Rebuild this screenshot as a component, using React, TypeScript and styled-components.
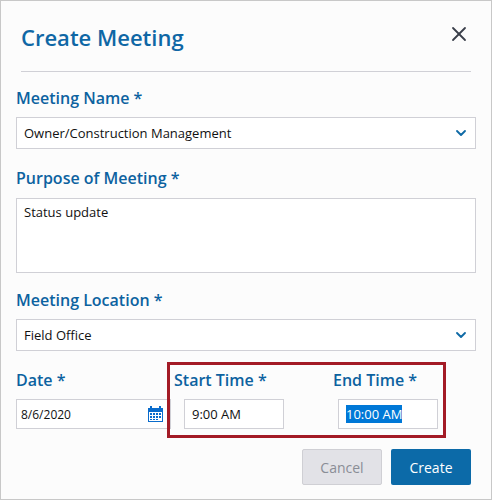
import styled, { createGlobalStyle } from "styled-components";
import { LuChevronDown, LuX } from "react-icons/lu";

const GlobalStyle = createGlobalStyle`
  html, body {
    margin: 0;
    padding: 0;
    background: #fcfcfc;
  }
  * {
    box-sizing: border-box;
  }
`;

function CalendarIcon() {
  return (
    <svg width="15" height="16" viewBox="0 0 15 16" fill="#0a6ccc">
      <path d="M0 2h2V0h2v2h7V0h2v2h2v14H0V2zm1 4v9h13V6H1z" />
      <path d="M2 7h2v2H2zM5 7h2v2H5zM8 7h2v2H8zM11 7h2v2h-2zM2 10h2v2H2zM5 10h2v2H5zM8 10h2v2H8zM11 10h2v2h-2zM5 13h2v1H5zM8 13h2v1H8zM2 13h2v1H2z" />
    </svg>
  );
}

export default function App() {
  return (
    <>
      <GlobalStyle />
      <Dialog>
        <Header>
          <Title>Create Meeting</Title>
          <CloseButton>
            <LuX size={24} strokeWidth={1.8} />
          </CloseButton>
        </Header>
        <Field $top={15} $gap={8}>
          <Label>Meeting Name *</Label>
          <SelectBox>
            <span>Owner/Construction Management</span>
            <LuChevronDown size={16} color="#0f6aa6" strokeWidth={2.8} />
          </SelectBox>
        </Field>
        <Field $top={18} $gap={9}>
          <Label>Purpose of Meeting *</Label>
          <TextArea>Status update</TextArea>
        </Field>
        <Field $top={16} $gap={8}>
          <Label>Meeting Location *</Label>
          <SelectBox>
            <span>Field Office</span>
            <LuChevronDown size={16} color="#0f6aa6" strokeWidth={2.8} />
          </SelectBox>
        </Field>
        <DateRow>
          <DateColumn>
            <RowLabel>Date *</RowLabel>
            <DateInput>
              <span>8/6/2020</span>
              <CalendarIcon />
            </DateInput>
          </DateColumn>
          <TimeHighlight>
            <TimeColumn>
              <RowLabel>Start Time *</RowLabel>
              <TimeInput $indent={10}>9:00 AM</TimeInput>
            </TimeColumn>
            <TimeColumn>
              <RowLabel>End Time *</RowLabel>
              <TimeInput $indent={5}>
                <Selected>10:00 AM</Selected>
              </TimeInput>
            </TimeColumn>
          </TimeHighlight>
        </DateRow>
        <Footer>
          <CancelButton>Cancel</CancelButton>
          <CreateButton>Create</CreateButton>
        </Footer>
      </Dialog>
    </>
  );
}

const Dialog = styled.div`
  width: 492px;
  height: 500px;
  border: 1px solid #c8c8c8;
  background: #fcfcfc;
  padding: 0 15px;
  font-family: "Open Sans", sans-serif;
  color: #111;
`;

const Header = styled.div`
  display: flex;
  justify-content: space-between;
  margin: 0 5px 0 5px;
  height: 71px;
  border-bottom: 1px solid #d0d0d6;
  padding-top: 19px;
`;

const Title = styled.h1`
  margin: 0;
  font-size: 22px;
  line-height: 35px;
  font-weight: 600;
  color: #0f67a5;
`;

const CloseButton = styled.div`
  color: #3a3f4a;
  padding: 2px 0 0 0;
  line-height: 0;
`;

const Field = styled.div<{ $top: number; $gap: number }>`
  margin-top: ${(p) => p.$top}px;
  & > div:first-child {
    margin-bottom: ${(p) => p.$gap}px;
  }
`;

const Label = styled.div`
  font-size: 16px;
  line-height: 22px;
  font-weight: 600;
  color: #0c62a0;
  margin-bottom: 9px;
`;

const RowLabel = styled(Label)`
  padding-top: 1px;
  margin-bottom: 8px;
`;

const SelectBox = styled.div`
  display: flex;
  align-items: center;
  justify-content: space-between;
  height: 32px;
  padding: 0 6px 0 7px;
  border: 1px solid #d0d0d6;
  background: #fff;
  font-size: 13px;
`;

const TextArea = styled.div`
  height: 75px;
  padding: 4px 7px;
  border: 1px solid #d0d0d6;
  background: #fff;
  font-size: 13px;
  line-height: 18px;
`;

const DateRow = styled.div`
  display: flex;
  margin-top: 11px;
`;

const DateColumn = styled.div`
  width: 151px;
  padding-top: 6px;
`;

const DateInput = styled.div`
  display: flex;
  align-items: center;
  justify-content: space-between;
  height: 30px;
  margin-right: -4px;
  padding: 0 7px 0 4px;
  border: 1px solid #d0d0d6;
  background: #fff;
  font-size: 12px;
`;

const TimeHighlight = styled.div`
  display: flex;
  gap: 59px;
  width: 279px;
  height: 76px;
  border: 3px solid #a31b26;
  padding: 3px 5px 0 4px;
  position: relative;
`;

const TimeColumn = styled.div`
  width: 100px;
`;

const TimeInput = styled.div<{ $indent: number }>`
  height: 30px;
  margin-left: ${(p) => p.$indent}px;
  padding: 0 7px;
  width: 100px;
  display: flex;
  align-items: center;
  border: 1px solid #d0d0d6;
  background: #fff;
  font-size: 13px;
`;

const Selected = styled.span`
  background: #0078d7;
  color: #fff;
`;

const Footer = styled.div`
  display: flex;
  justify-content: flex-end;
  gap: 9px;
  margin-top: 11px;
  padding-right: 5px;
`;

const CancelButton = styled.div`
  width: 80px;
  height: 36px;
  display: flex;
  align-items: center;
  justify-content: center;
  border: 1px solid #cfcfd4;
  border-radius: 2px;
  background: #e2e2e7;
  color: #8a8d96;
  font-size: 14px;
`;

const CreateButton = styled.div`
  width: 80px;
  height: 36px;
  display: flex;
  align-items: center;
  justify-content: center;
  border-radius: 2px;
  background: #0c6aa8;
  color: #fff;
  font-size: 14px;
`;
